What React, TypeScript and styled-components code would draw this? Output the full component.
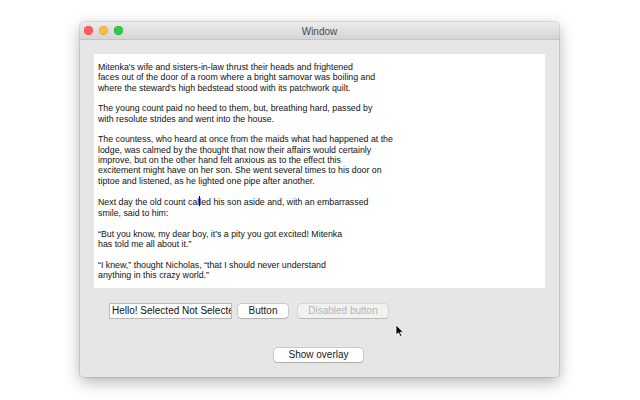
import React from "react";
import styled, { createGlobalStyle } from "styled-components";

const Global = createGlobalStyle`
  html, body { margin: 0; padding: 0; background: #ffffff; }
  body { width: 640px; height: 400px; overflow: hidden; font-family: "Liberation Sans", Arial, sans-serif; }
`;

const Page = styled.div`
  position: relative;
  width: 640px;
  height: 400px;
  padding: 22px 0 0 80px;
  box-sizing: border-box;
`;

const Win = styled.div`
  width: 479px;
  height: 355px;
  background: #e6e6e6;
  border-radius: 4px;
  box-shadow: 0 0 0 1px rgba(0,0,0,0.1), 0 5px 16px rgba(0,0,0,0.3);
  display: flex;
  flex-direction: column;
  overflow: hidden;
`;

const TitleBar = styled.div`
  height: 17px;
  flex: none;
  position: relative;
  display: flex;
  align-items: center;
  justify-content: center;
  background: linear-gradient(#ebebeb, #d5d5d5);
  border-bottom: 1px solid #c4c4c4;
`;

const Lights = styled.div`
  position: absolute;
  left: 4px;
  top: 4px;
  display: flex;
  gap: 6px;
`;

const Light = styled.span<{ $c: string; $b: string }>`
  width: 9px;
  height: 9px;
  border-radius: 50%;
  background: ${p => p.$c};
  box-shadow: inset 0 0 0 0.5px ${p => p.$b};
`;

const Title = styled.div`
  font-size: 10px;
  color: #4a4a4a;
  padding-top: 1px;
`;

const Body = styled.div`
  flex: 1;
  padding: 14px 14px 0 14px;
  display: flex;
  flex-direction: column;
`;

const TextArea = styled.div`
  height: 234px;
  background: #ffffff;
  padding: 8px 4px 0 4px;
  box-sizing: border-box;
  font-size: 8.8px;
  line-height: 10.35px;
  color: #111;
  white-space: pre;
`;

const Row = styled.div`
  display: flex;
  align-items: center;
  padding: 15px 0 0 15px;
`;

const Input = styled.div`
  width: 119px;
  height: 14px;
  border: 1px solid #b9b9b9;
  background: #fff;
  font-size: 10px;
  line-height: 14px;
  padding-left: 2px;
  overflow: hidden;
  white-space: nowrap;
  color: #111;
`;

const Btn = styled.div<{ $w: number; $ml?: number; $disabled?: boolean }>`
  width: ${p => p.$w}px;
  margin-left: ${p => p.$ml ?? 0}px;
  height: 14px;
  border-radius: 3px;
  background: ${p => (p.$disabled ? "#f1f1f1" : "#ffffff")};
  color: ${p => (p.$disabled ? "#b3b3b3" : "#1a1a1a")};
  box-shadow: 0 0 0 0.5px rgba(0,0,0,${p => (p.$disabled ? 0.12 : 0.22)}), 0 0.5px 1px rgba(0,0,0,0.15);
  font-size: 10px;
  line-height: 14px;
  text-align: center;
`;

const BottomRow = styled.div`
  display: flex;
  justify-content: center;
  padding-top: 29px;
  padding-right: 2px;
`;

const Cursor = styled.svg`
  position: absolute;
  left: 395px;
  top: 324px;
`;

const Caret = styled.span`
  display: inline-block;
  width: 1px;
  height: 10px;
  background: #000;
  vertical-align: -1px;
  margin: 0 -0.5px;
`;

const text1 = `Mitenka's wife and sisters-in-law thrust their heads and frightened
faces out of the door of a room where a bright samovar was boiling and
where the steward's high bedstead stood with its patchwork quilt.

The young count paid no heed to them, but, breathing hard, passed by
with resolute strides and went into the house.

The countess, who heard at once from the maids what had happened at the
lodge, was calmed by the thought that now their affairs would certainly
improve, but on the other hand felt anxious as to the effect this
excitement might have on her son. She went several times to his door on
tiptoe and listened, as he lighted one pipe after another.

Next day the old count cal`;
const text2 = `led his son aside and, with an embarrassed
smile, said to him:

\u201CBut you know, my dear boy, it\u2019s a pity you got excited! Mitenka
has told me all about it.\u201D

\u201CI knew,\u201D thought Nicholas, \u201Cthat I should never understand
anything in this crazy world.\u201D`;

export default function App() {
  return (
    <Page>
      <Global />
      <Win>
        <TitleBar>
          <Lights>
            <Light $c="#fc605c" $b="#de4a44" />
            <Light $c="#fdbc40" $b="#de9f34" />
            <Light $c="#34c84a" $b="#27aa35" />
          </Lights>
          <Title>Window</Title>
        </TitleBar>
        <Body>
          <TextArea>
            {text1}
            <Caret />
            {text2}
          </TextArea>
          <Row>
            <Input>Hello! Selected Not Selected</Input>
            <Btn $w={50} $ml={6}>Button</Btn>
            <Btn $w={90} $ml={10} $disabled>Disabled button</Btn>
          </Row>
          <BottomRow>
            <Btn $w={89}>Show overlay</Btn>
          </BottomRow>
        </Body>
      </Win>
      <Cursor width="10" height="14" viewBox="0 0 10 14">
        <path d="M1 1 L1 11 L3.5 8.8 L5.3 12.6 L6.9 11.9 L5.2 8.2 L8.4 8.2 Z" fill="#000" stroke="#fff" strokeWidth="0.8" />
      </Cursor>
    </Page>
  );
}
